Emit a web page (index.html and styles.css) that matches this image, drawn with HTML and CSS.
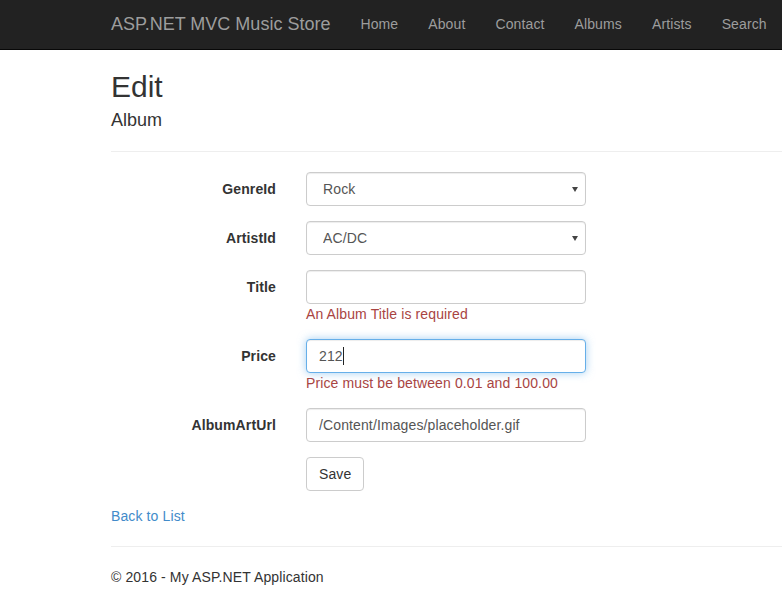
FILE: index.html
```html
<!DOCTYPE html>
<html>
<head>
<meta charset="utf-8">
<title>Edit - ASP.NET MVC Music Store</title>
<link rel="stylesheet" href="styles.css">
</head>
<body>
<header class="navbar">
  <div class="container nav-inner">
    <a class="brand" href="#">ASP.NET MVC Music Store</a>
    <ul class="nav">
      <li><a href="#">Home</a></li>
      <li><a href="#">About</a></li>
      <li><a href="#">Contact</a></li>
      <li><a href="#">Albums</a></li>
      <li><a href="#">Artists</a></li>
      <li><a href="#">Search</a></li>
    </ul>
  </div>
</header>
<main class="container body-content">
  <h2 class="title">Edit</h2>
  <h4 class="subtitle">Album</h4>
  <hr class="rule">
  <form class="form">
    <div class="form-group">
      <label class="label" for="genre">GenreId</label>
      <div class="field">
        <div class="select-wrap">
          <select id="genre" class="control select"><option>Rock</option></select>
        </div>
      </div>
    </div>
    <div class="form-group">
      <label class="label" for="artist">ArtistId</label>
      <div class="field">
        <div class="select-wrap">
          <select id="artist" class="control select"><option>AC/DC</option></select>
        </div>
      </div>
    </div>
    <div class="form-group">
      <label class="label" for="title">Title</label>
      <div class="field">
        <input id="title" class="control" type="text" value="">
        <span class="error">An Album Title is required</span>
      </div>
    </div>
    <div class="form-group">
      <label class="label" for="price">Price</label>
      <div class="field">
        <div class="input-wrap">
          <input id="price" class="control focused" type="text" value="212">
          <span class="caret"></span>
        </div>
        <span class="error">Price must be between 0.01 and 100.00</span>
      </div>
    </div>
    <div class="form-group">
      <label class="label" for="art">AlbumArtUrl</label>
      <div class="field">
        <input id="art" class="control" type="text" value="/Content/Images/placeholder.gif">
      </div>
    </div>
    <div class="form-group">
      <div class="label"></div>
      <div class="field">
        <button type="button" class="btn">Save</button>
      </div>
    </div>
  </form>
  <div class="back"><a href="#">Back to List</a></div>
  <hr class="rule footer-rule">
  <footer class="footer">
    <p>&copy; 2016 - My ASP.NET Application</p>
  </footer>
</main>
</body>
</html>
```

FILE: styles.css
```css
* { box-sizing: border-box; }
html, body { overflow: hidden; }
body {
  margin: 0;
  font-family: "Liberation Sans", Arial, sans-serif;
  font-size: 14px;
  line-height: 20px;
  letter-spacing: 0.12px;
  color: #333;
  background: #fff;
  width: 782px;
  height: 607px;
}
a { text-decoration: none; }

.container {
  margin-left: 96px;
  padding: 0 0 0 15px;
}

.navbar {
  background: #222;
  border-bottom: 1px solid #080808;
  height: 50px;
}
.nav-inner {
  display: flex;
  align-items: flex-start;
  height: 49px;
}
.brand {
  margin-left: -15px;
  padding: 14px 15px 15px;
  font-size: 18px;
  line-height: 20px;
  letter-spacing: 0;
  color: #9d9d9d;
}
.nav {
  display: flex;
  list-style: none;
  margin: 0;
  padding: 0;
}
.nav a {
  display: block;
  padding: 14px 15px 15px;
  line-height: 20px;
  color: #9d9d9d;
}

.title {
  font-size: 30px;
  font-weight: 500;
  line-height: 1.1;
  letter-spacing: 0;
  margin: 20px 0 8px;
}
.subtitle {
  font-size: 18px;
  font-weight: 500;
  line-height: 1.1;
  letter-spacing: 0;
  margin: 0;
}
.rule {
  border: 0;
  border-top: 1px solid #eee;
  margin: 20px 0;
  height: 0;
}

.form { margin: 0 0 0 -15px; }
.form-group {
  display: flex;
  margin-bottom: 15px;
}
.label {
  width: 195px;
  padding: 7px 15px 0;
  text-align: right;
  font-weight: bold;
  flex: none;
}
.field {
  flex: 1;
  padding: 0 0 0 15px;
}
.control {
  display: block;
  width: 280px;
  height: 34px;
  padding: 6px 12px;
  font-family: inherit;
  font-size: 14px;
  line-height: 20px;
  letter-spacing: 0.12px;
  color: #555;
  background: #fff;
  border: 1px solid #ccc;
  border-radius: 4px;
  box-shadow: inset 0 1px 1px rgba(0,0,0,.075);
  outline: none;
  margin: 0;
}
.select {
  -webkit-appearance: none;
  appearance: none;
  padding-left: 16px;
}
.select-wrap, .input-wrap {
  position: relative;
  width: 280px;
}
.select-wrap::after {
  content: "";
  position: absolute;
  right: 8px;
  top: 15px;
  border-left: 3px solid transparent;
  border-right: 3px solid transparent;
  border-top: 5px solid #444;
  pointer-events: none;
}
.focused {
  border-color: #66afe9;
  box-shadow: inset 0 1px 1px rgba(0,0,0,.075), 0 0 8px rgba(102,175,233,.6);
}
.caret {
  position: absolute;
  left: 37px;
  top: 8px;
  width: 1px;
  height: 18px;
  background: #222;
}
.error {
  color: #a94442;
}
.btn {
  display: inline-block;
  height: 34px;
  padding: 6px 12px;
  font-family: inherit;
  font-size: 14px;
  line-height: 20px;
  letter-spacing: 0.12px;
  color: #333;
  background: #fff;
  border: 1px solid #ccc;
  border-radius: 4px;
  cursor: pointer;
}
.back a { color: #428bca; }
.footer p { margin: 0 0 10px; }
```
